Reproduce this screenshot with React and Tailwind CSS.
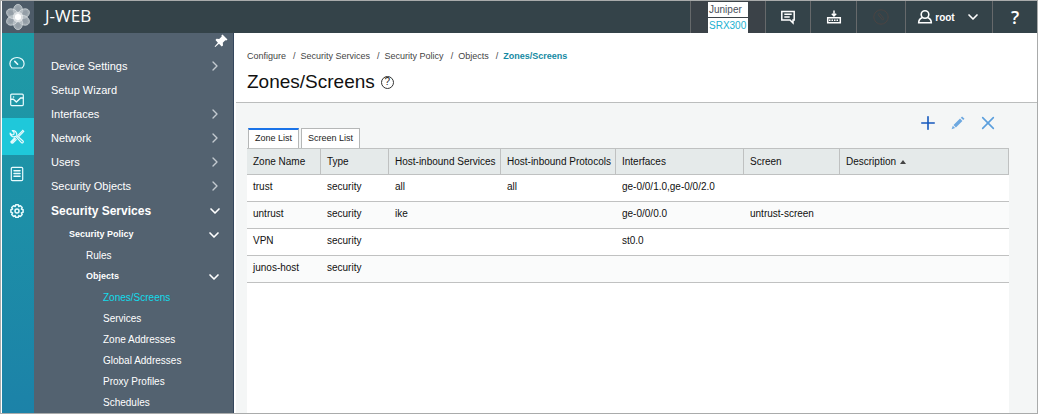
import { useState } from 'react';
import { ChevronDown, ChevronRight, Plus, X } from 'lucide-react';

const railItems = ['Monitor', 'Reports', 'Configure', 'Logs', 'Administration'];

const topMenu = [
    { label: 'Device Settings', expandable: true },
    { label: 'Setup Wizard', expandable: false },
    { label: 'Interfaces', expandable: true },
    { label: 'Network', expandable: true },
    { label: 'Users', expandable: true },
    { label: 'Security Objects', expandable: true },
];

const objectLinks = ['Zones/Screens', 'Services', 'Zone Addresses', 'Global Addresses', 'Proxy Profiles', 'Schedules'];

const crumbs = ['Configure', 'Security Services', 'Security Policy', 'Objects'];

const columns = [
    { key: 'name', label: 'Zone Name', width: 'w-[74px]' },
    { key: 'type', label: 'Type', width: 'w-[68px]' },
    { key: 'services', label: 'Host-inbound Services', width: 'w-[112px]' },
    { key: 'protocols', label: 'Host-inbound Protocols', width: 'w-[115px]' },
    { key: 'interfaces', label: 'Interfaces', width: 'w-[128px]' },
    { key: 'screen', label: 'Screen', width: 'w-[96px]' },
    { key: 'description', label: 'Description', width: '', sorted: true },
];

const zones = [
    { name: 'trust', type: 'security', services: 'all', protocols: 'all', interfaces: 'ge-0/0/1.0,ge-0/0/2.0' },
    { name: 'untrust', type: 'security', services: 'ike', interfaces: 'ge-0/0/0.0', screen: 'untrust-screen' },
    { name: 'VPN', type: 'security', interfaces: 'st0.0' },
    { name: 'junos-host', type: 'security' },
];

function Logo() {
    return (
        <svg viewBox="0 0 32 32" className="w-7 h-7" aria-hidden="true">
            {[0, 60, 120, 180, 240, 300].map(angle => (
                <g key={angle} transform={`rotate(${angle} 16 16)`}>
                    <ellipse cx="16" cy="8.500" rx="5.200" ry="7" fill="#b9c1c7" fillOpacity="0.75" stroke="#dfe3e6" strokeOpacity="0.7" />
                    <ellipse cx="16" cy="6.800" rx="2.400" ry="3" fill="#8d98a2" fillOpacity="0.6" />
                </g>
            ))}
            <circle cx="16" cy="16" r="6" fill="#fff" fillOpacity="0.5" />
            <circle cx="16" cy="16" r="3.500" fill="#fff" />
        </svg>
    );
}

function RailIcon({ name }) {
    return (
        <svg viewBox="0 0 16 16" className="w-4 h-4" fill="none" stroke="#e9fbfd" strokeWidth="1.2" strokeLinecap="round" strokeLinejoin="round" aria-hidden="true">
            {name === 'Monitor' && (
                <>
                    <path d="M3 13C1.6 11.9.9 10.4.9 8.7a7.1 6.2 0 0 1 14.2 0c0 1.7-.7 3.2-2.1 4.3z" />
                    <path d="M8.600 9.200 5.800 6.400" strokeWidth="1.600" />
                </>
            )}
            {name === 'Reports' && (
                <>
                    <rect x="1.700" y="2.200" width="12.600" height="11.400" rx="1" />
                    <path d="M2 7.200h2.400L7.400 10l4.200-4h2.600M4.500 5h.1" strokeWidth="1.500" />
                </>
            )}
            {name === 'Configure' && (
                <>
                    <path d="m6.800 7.400 5.600 6.200c1.200 1 2.600-.5 1.600-1.600L7.800 6.500C8.200 3.400 6 1.200 3.300 1.700l1.900 1.900-.4 1.900-1.900.4L1.100 4.100C.8 6.700 4 8.700 6.800 7.400z" />
                    <path d="m13.800 1.400-4.600 4.800M14.800 2.400l-4.600 4.800M13.800 1.400l1 1M6.400 9.600l-4 4.200M5.600 9l-3.800 3.800.6 1.200 1.400.2 3.500-3.600" />
                </>
            )}
            {name === 'Logs' && (
                <>
                    <rect x="2.300" y="1.300" width="11.400" height="13.400" rx="1.200" />
                    <path d="M5 4.800h6M5 7.500h6M5 10.200h6" strokeWidth="1.500" />
                </>
            )}
            {name === 'Administration' && (
                <>
                    <path d="M6.700 1.200h2.600l.5 1.700 1.600-.8 1.800 1.800-.8 1.600 1.700.6v2.600l-1.700.6.8 1.600-1.800 1.900-1.600-.8-.5 1.700H6.700L6.200 12l-1.600.8-1.900-1.900.9-1.600-1.700-.6V6.100l1.700-.6-.9-1.600L4.600 2.100l1.600.8z" transform="translate(0 .6)" strokeWidth="1.500" />
                    <circle cx="8" cy="8" r="2" strokeWidth="1.500" />
                </>
            )}
        </svg>
    );
}

function TopBar() {
    return (
        <header className="flex h-8 bg-[#344349] text-white">
            <div className="w-8 shrink-0 flex items-center justify-center bg-[#4d5b68]">
                <Logo />
            </div>
            <div className="flex-1 flex items-center pl-[11px] pb-1 font-['Open_Sans',sans-serif] text-[17px] leading-none">J-WEB</div>
            <div className="w-[75px] flex justify-center border-l border-[#66696b] bg-[#3b4248]">
                <div className="w-10 flex flex-col gap-px pt-px text-[10px] leading-[15px]">
                    <span className="h-[15px] bg-white text-[#4a4f5a] pl-px">Juniper</span>
                    <span className="h-[15px] bg-white text-[#21b0d0] pl-px">SRX300</span>
                </div>
            </div>
            <button type="button" aria-label="Feedback" className="w-[45px] flex items-center justify-center border-l border-[#66696b]">
                <svg viewBox="0 0 16 16" className="w-4 h-4" fill="none" stroke="#fff" strokeWidth="1.500">
                    <path d="M1.800 2.500h12.400v8.500h-1.200v3l-3-3H1.800z" />
                    <path d="M4.300 5.300h7.400M4.300 8h5.400" />
                </svg>
            </button>
            <button type="button" aria-label="Commit" className="w-[46px] flex items-center justify-center border-l border-[#66696b]">
                <svg viewBox="0 0 16 16" className="w-4 h-4" fill="none" stroke="#fff" strokeWidth="1.500">
                    <path d="M8 1.500v5M5.800 4.800 8 7l2.200-2.200" />
                    <path d="M1.700 8.700h12.600v5H1.700z" />
                    <path d="M3 11.200h10" strokeDasharray="1.500 1" />
                </svg>
            </button>
            <button type="button" aria-label="Launch" disabled className="w-[49px] flex items-center justify-center border-l border-[#66696b]">
                <svg viewBox="0 0 16 16" className="w-4 h-4" fill="none" stroke="#4a4443">
                    <circle cx="8" cy="8" r="7.200" />
                    <path d="m5 5.500 4.500 5.500 1.500-1.200L6.500 4.300z" />
                </svg>
            </button>
            <button type="button" className="w-[87px] flex items-center justify-center gap-0.5 border-l border-[#66696b] text-[10px] font-bold">
                <svg viewBox="0 0 16 16" className="w-4 h-4" fill="none" stroke="#fff" strokeWidth="1.600" aria-hidden="true">
                    <circle cx="8" cy="5.500" r="3.800" />
                    <path d="M5.500 8.500C3.300 9.200 1.700 10.800 1.700 13.800h12.600c0-3-1.600-4.600-3.800-5.300" />
                </svg>
                root
                <ChevronDown className="w-4 h-4 ml-2" strokeWidth={2.500} />
            </button>
            <button type="button" className="w-[45px] border-l border-[#66696b] font-['Open_Sans',sans-serif] text-[18px] font-semibold leading-none">?</button>
        </header>
    );
}

function SideMenu() {
    return (
        <nav className="w-[200px] shrink-0 bg-[#536270] border-r border-[#34465c] text-white text-[10px]" aria-label="Configure">
            <div className="flex justify-end h-[21px] pr-1">
                <button type="button" aria-label="Pin menu" className="w-4 h-4">
                    <svg viewBox="0 0 16 16" className="w-4 h-4" fill="#fff">
                        <path d="m9.500 1.500 5 5-1.200 1-1-.2-2.500 2.500.2 2.700-1.300 1L6 10.800 2.300 14l-.7-.6L4.900 9.700 2.500 7l1-1.300 2.700.3 2.500-2.500-.3-1z" />
                    </svg>
                </button>
            </div>
            <ul className="text-[11px]">
                {topMenu.map(item => (
                    <li key={item.label}>
                        <a href="#" className="flex items-center justify-between h-6 pl-[17px] pr-2.5">
                            {item.label}
                            {item.expandable && <ChevronRight className="w-4 h-4 text-[#c3cad0]" />}
                        </a>
                    </li>
                ))}
            </ul>
            <a href="#" className="flex items-center justify-between h-[26px] pl-[17px] pr-2.5 text-[12px] font-bold">
                Security Services
                <ChevronDown className="w-4 h-4" strokeWidth={2.500} />
            </a>
            <a href="#" className="flex items-center justify-between h-[21px] pl-[35px] pr-[11px] text-[9px] font-bold">
                Security Policy
                <ChevronDown className="w-4 h-4" strokeWidth={2.500} />
            </a>
            <a href="#" className="flex items-center h-[21px] pl-[52px]">Rules</a>
            <a href="#" className="flex items-center justify-between h-[21px] pl-[52px] pr-[11px] text-[9px] font-bold">
                Objects
                <ChevronDown className="w-4 h-4" strokeWidth={2.500} />
            </a>
            <ul>
                {objectLinks.map((label, i) => (
                    <li key={label}>
                        <a href="#" className={`flex items-center h-[21px] pl-[69px] ${i === 0 ? 'text-[#12dcec]' : ''}`}>{label}</a>
                    </li>
                ))}
            </ul>
        </nav>
    );
}

function ZoneTable() {
    return (
        <table className="w-full table-fixed border-separate border-spacing-0 text-[10px] leading-3 text-left text-[#111]">
            <thead>
                <tr>
                    {columns.map(col => (
                        <th key={col.key} className={`${col.width} h-[27px] px-1.5 bg-[#e5eaea] border-y border-r border-[#bfc1c1] font-normal whitespace-nowrap`}>
                            {col.label}
                            {col.sorted && (
                                <svg viewBox="0 0 6 4" className="inline-block w-1.5 h-1 ml-1" fill="#444" aria-hidden="true">
                                    <path d="M3 0l3 4H0z" />
                                </svg>
                            )}
                        </th>
                    ))}
                </tr>
            </thead>
            <tbody>
                {zones.map(zone => (
                    <tr key={zone.name} className="even:bg-[#fafbfb]">
                        {columns.map(col => (
                            <td key={col.key} className="h-[27px] px-1.5 pb-0.5 border-b border-[#c0c1c1]">{zone[col.key]}</td>
                        ))}
                    </tr>
                ))}
            </tbody>
        </table>
    );
}

export default function App() {
    const [tab, setTab] = useState('Zone List');

    return (
        <div className="min-h-screen flex flex-col border border-[#a9abab] pl-px bg-white font-['Liberation_Sans',Arial,sans-serif]">
            <TopBar />
            <div className="flex-1 flex">
                {/* Icon rail */}
                <nav className="w-8 shrink-0 pt-[11px] pr-px bg-linear-to-b from-[#1f9ba6] to-[#1c82a8]" aria-label="Main">
                    {railItems.map(name => (
                        <a
                            key={name}
                            href="#"
                            aria-label={name}
                            className={`flex items-center justify-center h-[37px] -mr-px pr-0.5 ${name === 'Configure' ? 'bg-[#1fc8da]' : ''}`}
                        >
                            <RailIcon name={name} />
                        </a>
                    ))}
                </nav>
                <SideMenu />

                <main className="flex-1 min-w-0 flex flex-col pl-0.5">
                    {/* Breadcrumb and title */}
                    <div className="h-[70px] pl-[11px] pt-[17px] border-b border-[#bbbdbd]">
                        <ol className="flex text-[9px] leading-3 text-[#444]">
                            {crumbs.map(crumb => (
                                <li key={crumb}>
                                    <a href="#">{crumb}</a>
                                    <span className="pl-[7px] pr-[5px]">/</span>
                                </li>
                            ))}
                            <li className="font-bold text-[#158aa3]">Zones/Screens</li>
                        </ol>
                        <div className="flex items-center gap-1.5 mt-2">
                            <h1 className="text-[19px] leading-6 text-[#111]">Zones/Screens</h1>
                            <button type="button" aria-label="Help" className="w-[13px] h-[13px] flex items-center justify-center rounded-full border border-[#333] text-[10px] leading-none text-[#222]">?</button>
                        </div>
                    </div>

                    <div className="flex-1 flex flex-col pl-[11px] pr-7 bg-[#f4f6f6]">
                        <div className="flex justify-between h-[45px]">
                            <div className="flex items-end gap-0.5 pl-px" role="tablist">
                                {['Zone List', 'Screen List'].map(name => (
                                    <button
                                        key={name}
                                        type="button"
                                        role="tab"
                                        aria-selected={tab === name}
                                        onClick={() => setTab(name)}
                                        className={`h-5 px-1.5 bg-white border border-b-0 border-[#b5b7b7] text-[9px] text-[#222] ${tab === name ? 'border-t-2 border-t-[#1a73e8]' : ''}`}
                                    >
                                        {name}
                                    </button>
                                ))}
                            </div>
                            <div className="flex gap-3.5 pt-3 pr-[13px]">
                                <button type="button" aria-label="Add" className="w-4 h-4 text-[#1458bd]">
                                    <Plus className="w-4 h-4" viewBox="3 3 18 18" strokeWidth={1.800} />
                                </button>
                                <button type="button" aria-label="Edit" className="w-4 h-4 text-[#6da8e0]">
                                    <svg viewBox="0 0 16 16" className="w-4 h-4" fill="currentColor">
                                        <path d="m3.500 10 6.500-6.500 2.400 2.400-6.500 6.500zM10.800 2.700l1.300-1.300 2.400 2.400-1.300 1.300zM2.800 10.800l2.300 2.300-3.500 1.200z" />
                                    </svg>
                                </button>
                                <button type="button" aria-label="Delete" className="w-4 h-4 text-[#5b9fdd]">
                                    <X className="w-4 h-4" viewBox="3 3 18 18" strokeWidth={1.800} />
                                </button>
                            </div>
                        </div>
                        <div className="flex-1 bg-white">
                            <ZoneTable />
                        </div>
                    </div>
                </main>
            </div>
        </div>
    );
}
